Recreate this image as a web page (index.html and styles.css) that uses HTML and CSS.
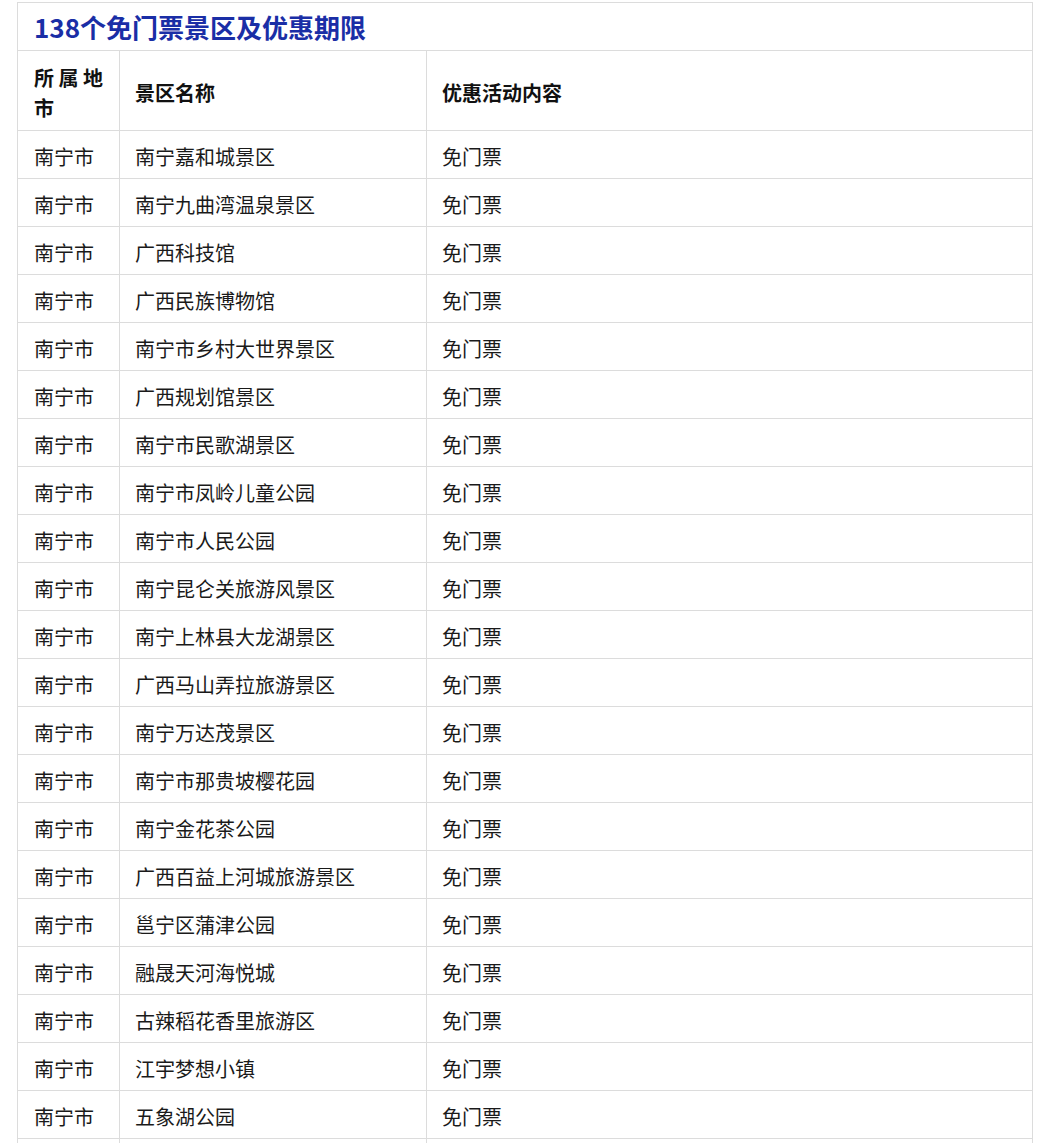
FILE: index.html
```html
<!DOCTYPE html>
<html lang="zh-CN">
<head>
<meta charset="utf-8">
<title>138个免门票景区及优惠期限</title>
<link rel="stylesheet" href="styles.css">
</head>
<body>
<div class="wrap">
<table class="tbl">
<colgroup><col class="c1"><col class="c2"><col class="c3"></colgroup>
<thead>
<tr class="title-row"><th colspan="3" class="title">138个免门票景区及优惠期限</th></tr>
<tr class="head-row"><th class="city-h">所属地市</th><th>景区名称</th><th>优惠活动内容</th></tr>
</thead>
<tbody>
<tr><td>南宁市</td><td>南宁嘉和城景区</td><td>免门票</td></tr>
<tr><td>南宁市</td><td>南宁九曲湾温泉景区</td><td>免门票</td></tr>
<tr><td>南宁市</td><td>广西科技馆</td><td>免门票</td></tr>
<tr><td>南宁市</td><td>广西民族博物馆</td><td>免门票</td></tr>
<tr><td>南宁市</td><td>南宁市乡村大世界景区</td><td>免门票</td></tr>
<tr><td>南宁市</td><td>广西规划馆景区</td><td>免门票</td></tr>
<tr><td>南宁市</td><td>南宁市民歌湖景区</td><td>免门票</td></tr>
<tr><td>南宁市</td><td>南宁市凤岭儿童公园</td><td>免门票</td></tr>
<tr><td>南宁市</td><td>南宁市人民公园</td><td>免门票</td></tr>
<tr><td>南宁市</td><td>南宁昆仑关旅游风景区</td><td>免门票</td></tr>
<tr><td>南宁市</td><td>南宁上林县大龙湖景区</td><td>免门票</td></tr>
<tr><td>南宁市</td><td>广西马山弄拉旅游景区</td><td>免门票</td></tr>
<tr><td>南宁市</td><td>南宁万达茂景区</td><td>免门票</td></tr>
<tr><td>南宁市</td><td>南宁市那贵坡樱花园</td><td>免门票</td></tr>
<tr><td>南宁市</td><td>南宁金花茶公园</td><td>免门票</td></tr>
<tr><td>南宁市</td><td>广西百益上河城旅游景区</td><td>免门票</td></tr>
<tr><td>南宁市</td><td>邕宁区蒲津公园</td><td>免门票</td></tr>
<tr><td>南宁市</td><td>融晟天河海悦城</td><td>免门票</td></tr>
<tr><td>南宁市</td><td>古辣稻花香里旅游区</td><td>免门票</td></tr>
<tr><td>南宁市</td><td>江宇梦想小镇</td><td>免门票</td></tr>
<tr><td>南宁市</td><td>五象湖公园</td><td>免门票</td></tr>
<tr class="next-row"><td></td><td></td><td></td></tr>
</tbody>
</table>
</div>
</body>
</html>
```
FILE: styles.css
```css
html, body {
  margin: 0;
  padding: 0;
  background: #ffffff;
}
.wrap {
  padding: 2px 20px 0 17px;
}
.tbl {
  width: 1016px;
  border-collapse: collapse;
  table-layout: fixed;
  font-family: "Noto Sans CJK SC", "Microsoft YaHei", sans-serif;
  font-size: 20px;
  color: #1a1a1a;
}
.c1 { width: 102px; }
.c2 { width: 307px; }
.tbl th, .tbl td {
  border: 1px solid #dcdcdc;
  padding: 10px 16px 6px 15px;
  line-height: 31px;
  text-align: left;
  vertical-align: middle;
}
.tbl th:first-child, .tbl td:first-child {
  padding-left: 16px;
}
.tbl th {
  font-weight: bold;
  color: #111111;
}
.title-row th.title {
  padding: 0 16px;
  font-size: 26px;
  line-height: 47px;
  color: #1a2ea6;
}
.head-row th {
  padding-top: 12px;
  padding-bottom: 7px;
  line-height: 30px;
}
.head-row th.city-h {
  text-align: justify;
}
.next-row td {
  height: 31px;
}
```
